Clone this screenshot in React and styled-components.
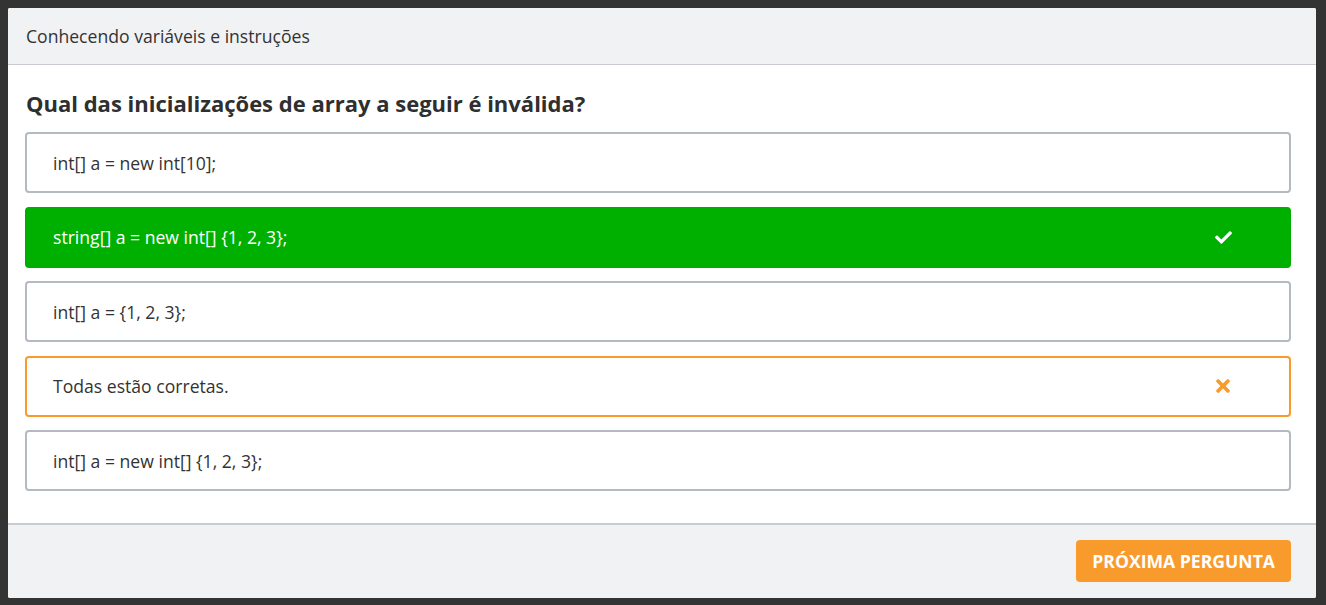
import React from 'react';
import styled, { createGlobalStyle } from 'styled-components';
import { FaCheck, FaTimes } from 'react-icons/fa';

const GlobalStyle = createGlobalStyle`
  html, body {
    margin: 0;
    padding: 0;
    background: #333333;
  }
  body {
    padding: 8px 10px 7px 8px;
    font-family: 'Open Sans', 'Liberation Sans', sans-serif;
  }
`;

const Card = styled.div`
  background: #ffffff;
  border-radius: 2px;
  overflow: hidden;
  width: 1308px;
`;

const Header = styled.div`
  height: 56px;
  display: flex;
  align-items: center;
  padding: 0 18px;
  background: #f1f2f4;
  border-bottom: 1px solid #c8ccd2;
  color: #333;
  font-size: 17.6px;
`;

const Body = styled.div`
  padding: 23px 25px 32px 17px;
`;

const Title = styled.h2`
  margin: 0 0 14px 1px;
  font-size: 22px;
  line-height: 30px;
  font-weight: 700;
  color: #2f2f2f;
`;

const Options = styled.div`
  display: flex;
  flex-direction: column;
  gap: 13.5px;
`;

const colors = {
  idle: { bg: '#fff', border: '#b4bac1', text: '#333' },
  correct: { bg: '#00b000', border: '#00b000', text: '#fff' },
  wrong: { bg: '#fff', border: '#f89a2c', text: '#333' },
};

const Option = styled.div`
  height: 61px;
  box-sizing: border-box;
  display: flex;
  align-items: center;
  justify-content: space-between;
  padding: 0 56px 0 26px;
  border: 2px solid ${(p) => colors[p.$state].border};
  background: ${(p) => colors[p.$state].bg};
  color: ${(p) => colors[p.$state].text};
  border-radius: 4px;
  font-size: 17.6px;
  font-weight: ${(p) => (p.$state === 'correct' ? 500 : 400)};
  cursor: pointer;
`;

const Mark = styled.span`
  width: 20px;
  display: flex;
  justify-content: center;
  color: ${(p) => (p.$state === 'correct' ? '#fff' : '#f89a2c')};
`;

const Footer = styled.div`
  display: flex;
  justify-content: flex-end;
  padding: 15px 25px 16px;
  background: #f1f2f4;
  border-top: 2px solid #c8ccd2;
`;

const NextButton = styled.button`
  height: 42px;
  padding: 0 16px;
  border: none;
  border-radius: 4px;
  background: #f89a2c;
  color: #fff;
  font-family: 'Open Sans', 'Liberation Sans', sans-serif;
  font-size: 17.6px;
  font-weight: 700;
  text-transform: uppercase;
  cursor: pointer;
`;

const answers = [
  { text: 'int[] a = new int[10];', state: 'idle' },
  { text: 'string[] a = new int[] {1, 2, 3};', state: 'correct' },
  { text: 'int[] a = {1, 2, 3};', state: 'idle' },
  { text: 'Todas estão corretas.', state: 'wrong' },
  { text: 'int[] a = new int[] {1, 2, 3};', state: 'idle' },
];

const App = () => {
  return (
    <>
      <GlobalStyle />
      <Card>
        <Header>Conhecendo variáveis e instruções</Header>
        <Body>
          <Title>Qual das inicializações de array a seguir é inválida?</Title>
          <Options>
            {answers.map((a) => (
              <Option key={a.text} $state={a.state}>
                <span>{a.text}</span>
                {a.state === 'correct' && (
                  <Mark $state="correct">
                    <FaCheck size={17} />
                  </Mark>
                )}
                {a.state === 'wrong' && (
                  <Mark $state="wrong">
                    <FaTimes size={20} />
                  </Mark>
                )}
              </Option>
            ))}
          </Options>
        </Body>
        <Footer>
          <NextButton>Próxima pergunta</NextButton>
        </Footer>
      </Card>
    </>
  );
};

export default App;
